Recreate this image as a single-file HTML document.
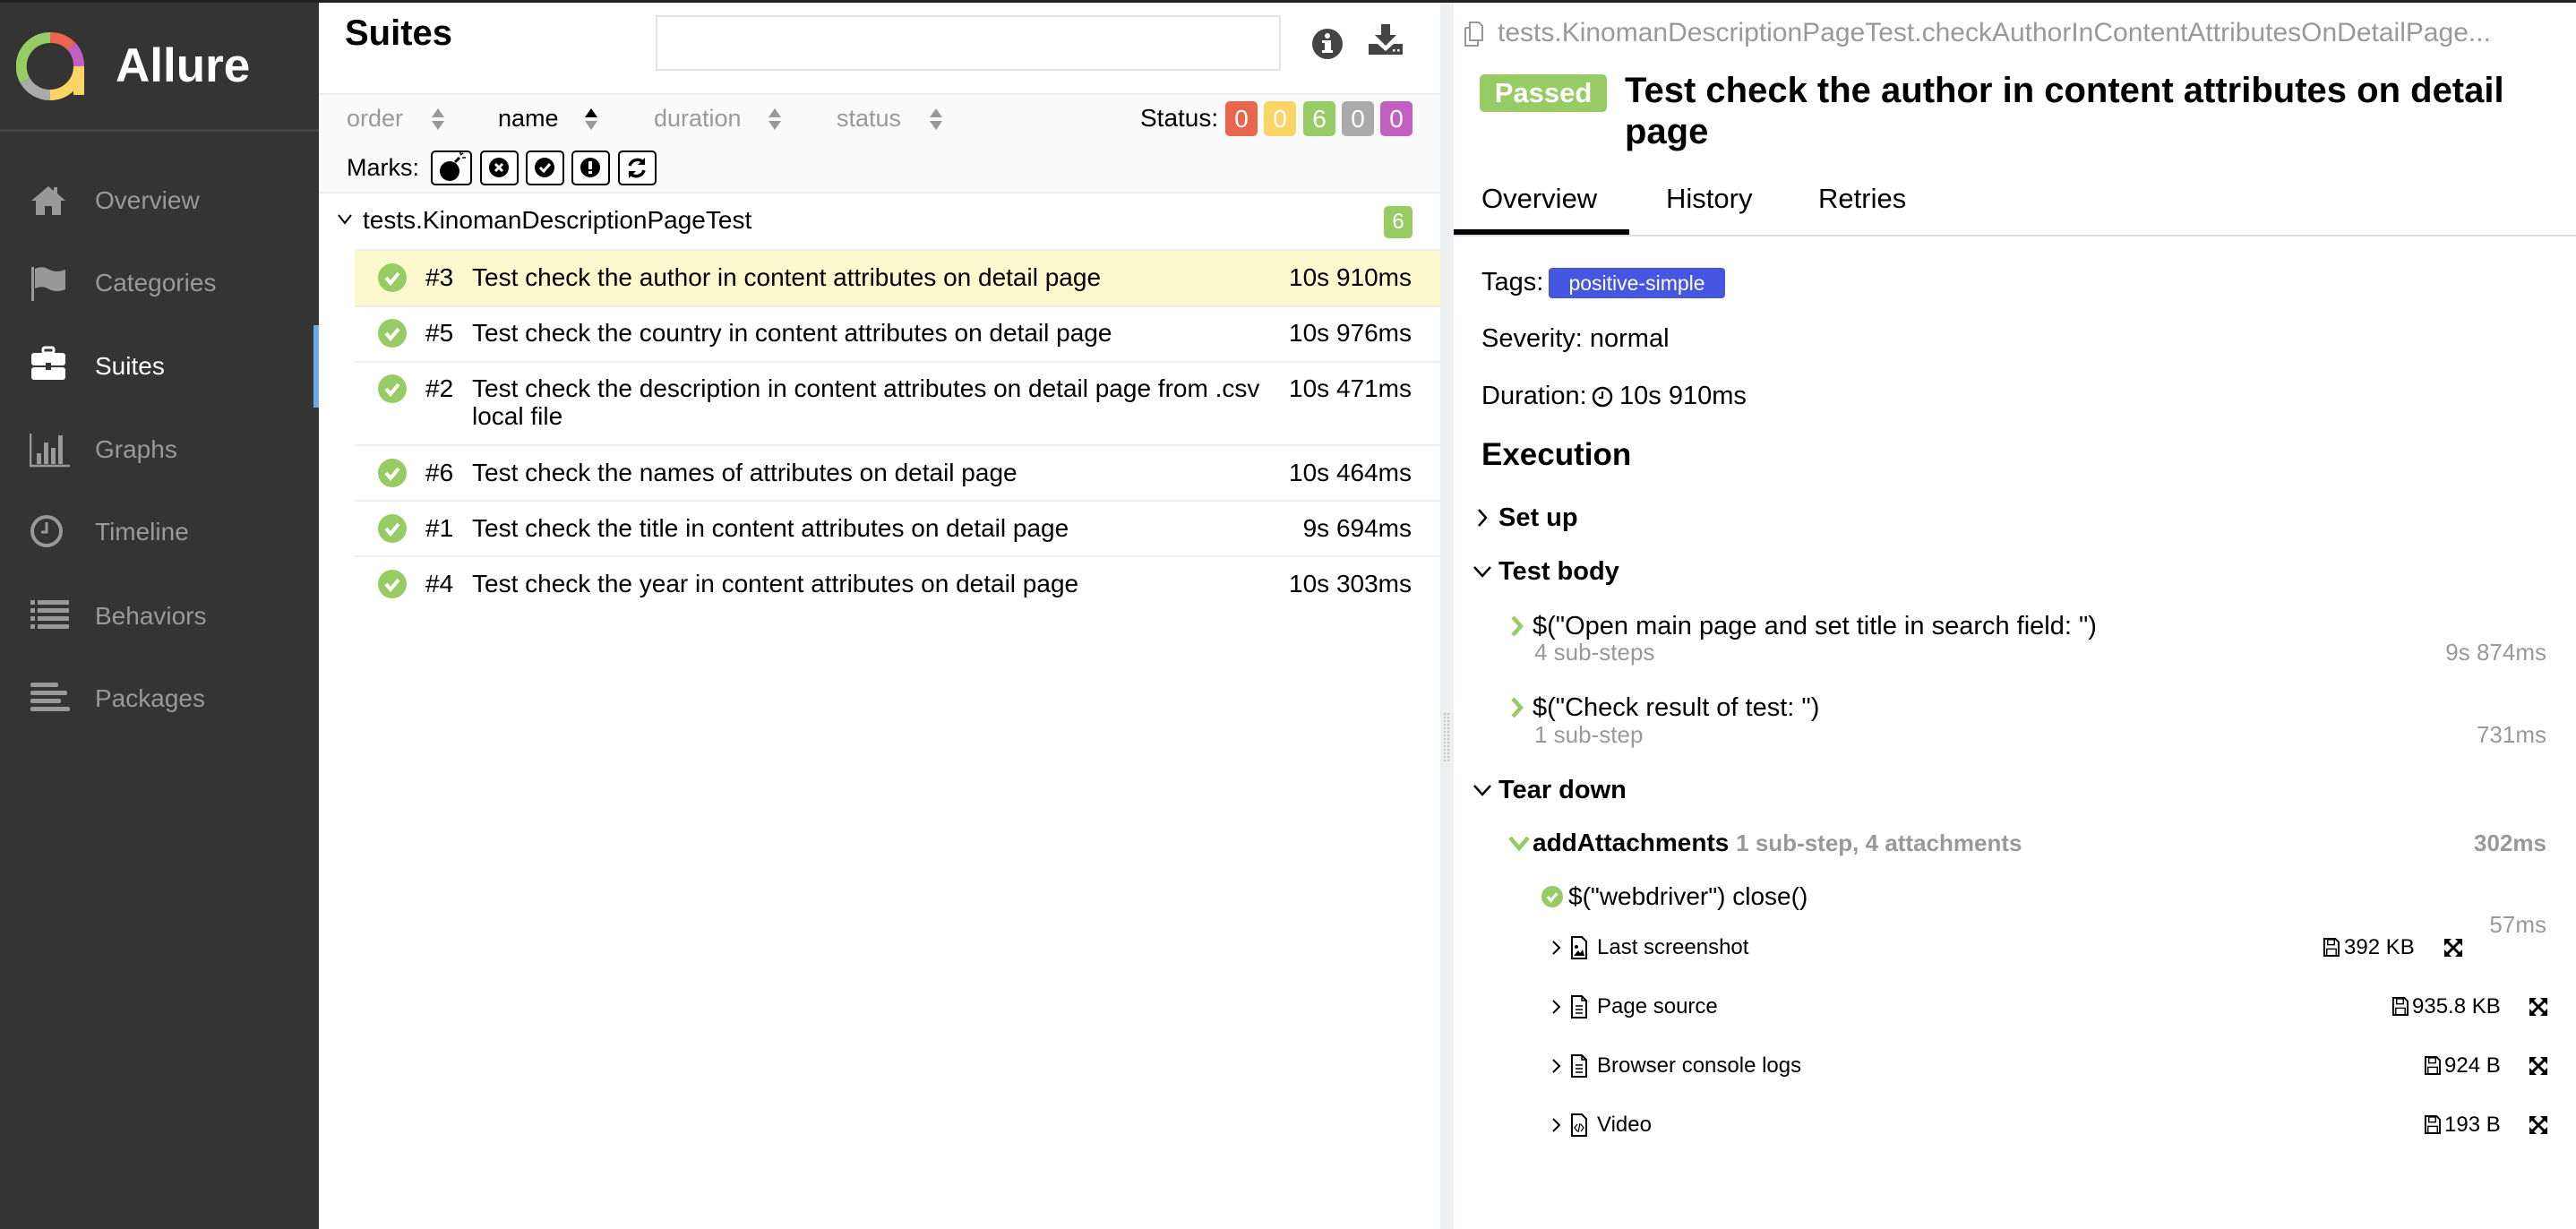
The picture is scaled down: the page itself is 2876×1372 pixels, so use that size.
<!DOCTYPE html>
<html><head><meta charset="utf-8">
<style>
*{margin:0;padding:0;box-sizing:border-box}
body{width:2876px;height:1372px;overflow:hidden;background:#fff;font-family:"Liberation Sans",Arial,sans-serif;position:relative;color:#000}
.a{position:absolute;white-space:nowrap}
.t{position:absolute;white-space:nowrap;height:40px;line-height:40px}
#side{position:absolute;left:0;top:0;width:356px;height:1372px;background:#343434}
.nav{position:absolute;left:106px;font-size:28px;color:#999;height:40px;line-height:40px}
.ni{position:absolute;left:33px}
.mid{font-size:28px}
.sortl{color:#999;font-size:27px}
.badge{position:absolute;top:113px;width:36px;height:39px;border-radius:5px;color:#fff;font-size:28px;text-align:center;line-height:39px}
.mk{position:absolute;top:168px;width:43px;height:39px;border:2px solid #000;border-radius:5px;background:#fff}
.row{position:absolute;left:396px;width:1212px;border-top:2px solid #eee}
.chk{position:absolute}
.r{position:absolute;font-size:29px;height:40px;line-height:40px;white-space:nowrap}
.gray{color:#999}
.att{position:absolute;font-size:24px;height:34px;line-height:34px;white-space:nowrap}
</style></head><body>
<div class="a" style="left:0;top:0;width:2876px;height:3px;background:#222;z-index:5"></div>

<div id="side">
  <svg class="a" style="left:18px;top:36px" width="80" height="80" viewBox="0 0 80 80">
    <g fill="none" stroke-width="12">
      <path d="M38 6 A32 32 0 0 0 10 54" stroke="#97cc64"/>
      <path d="M38 6 A32 32 0 0 1 62 16" stroke="#e8664e"/>
      <path d="M62 16 A32 32 0 0 1 70 38" stroke="#c160c0"/>
      <path d="M70 38 L70 70" stroke="#fad465"/>
      <path d="M70 38 A32 32 0 0 1 38 70" stroke="#fad465"/>
      <path d="M10 54 A32 32 0 0 0 38 70" stroke="#aaa"/>
    </g>
  </svg>
  <div class="a" style="left:129px;top:44px;font-size:53px;font-weight:bold;color:#fff;line-height:60px">Allure</div>
  <div class="a" style="left:0;top:144px;width:356px;height:3px;background:#444"></div>

  <!-- overview -->
  <svg class="ni" style="top:206px" width="42" height="36" viewBox="0 0 42 36"><path d="M21 2 L2 18 L7 18 L7 34 L17 34 L17 24 L25 24 L25 34 L35 34 L35 18 L40 18 L31 10 L31 3 L27 3 L27 7 Z" fill="#999"/></svg>
  <div class="nav" style="top:204px">Overview</div>
  <svg class="ni" style="top:296px" width="42" height="42" viewBox="0 0 42 42"><rect x="2" y="2" width="3" height="38" fill="#999"/><path d="M6 4 Q14 0 22 5 Q30 9 40 5 L40 27 Q30 31 22 27 Q14 22 6 26 Z" fill="#999"/></svg>
  <div class="nav" style="top:296px">Categories</div>
  <svg class="ni" style="top:386px" width="42" height="42" viewBox="0 0 42 42"><rect x="15" y="2" width="12" height="6" rx="2" fill="none" stroke="#fff" stroke-width="3"/><rect x="2" y="8" width="38" height="14" rx="3" fill="#fff"/><rect x="2" y="24" width="38" height="14" rx="3" fill="#fff"/><rect x="18" y="19" width="6" height="8" fill="#343434"/></svg>
  <div class="nav" style="top:389px;color:#fff">Suites</div>
  <div class="a" style="left:350px;top:363px;width:6px;height:92px;background:#6ea9e8"></div>
  <svg class="ni" style="top:482px" width="46" height="40" viewBox="0 0 46 40"><path d="M1 2 V38 H45" fill="none" stroke="#999" stroke-width="2.5"/><rect x="8" y="24" width="5" height="12" fill="#999"/><rect x="16" y="12" width="5" height="24" fill="#999"/><rect x="24" y="18" width="5" height="18" fill="#999"/><rect x="32" y="4" width="5" height="32" fill="#999"/></svg>
  <div class="nav" style="top:482px">Graphs</div>
  <svg class="ni" style="top:574px" width="40" height="40" viewBox="0 0 40 40"><circle cx="19" cy="19" r="16" fill="none" stroke="#999" stroke-width="4"/><path d="M19 9 V20 H13" fill="none" stroke="#999" stroke-width="3"/></svg>
  <div class="nav" style="top:574px">Timeline</div>
  <svg class="ni" style="top:668px" width="46" height="40" viewBox="0 0 46 40"><g fill="#999"><rect x="1" y="2" width="5" height="5"/><rect x="9" y="2" width="35" height="5"/><rect x="1" y="11" width="5" height="5"/><rect x="9" y="11" width="35" height="5"/><rect x="1" y="20" width="5" height="5"/><rect x="9" y="20" width="35" height="5"/><rect x="1" y="29" width="5" height="5"/><rect x="9" y="29" width="35" height="5"/></g></svg>
  <div class="nav" style="top:668px">Behaviors</div>
  <svg class="ni" style="top:760px" width="46" height="40" viewBox="0 0 46 40"><g fill="#999"><rect x="1" y="2" width="31" height="5" rx="2"/><rect x="1" y="11" width="41" height="5" rx="2"/><rect x="1" y="20" width="34" height="5" rx="2"/><rect x="1" y="29" width="44" height="5" rx="2"/></g></svg>
  <div class="nav" style="top:760px">Packages</div>
</div>

<!-- middle panel -->
<div class="a" style="left:385px;top:14px;font-size:40px;font-weight:bold;line-height:46px">Suites</div>
<div class="a" style="left:732px;top:17px;width:698px;height:62px;border:2px solid #e4e4e4"></div>
<svg class="a" style="left:1464px;top:31px" width="36" height="36" viewBox="0 0 36 36"><circle cx="18" cy="18" r="17" fill="#444"/><rect x="15" y="14" width="7" height="13" fill="#fff"/><rect x="12" y="14" width="6" height="3" fill="#fff"/><rect x="12" y="25" width="12" height="3" fill="#fff"/><circle cx="18" cy="9" r="3" fill="#fff"/></svg>
<svg class="a" style="left:1527px;top:27px" width="40" height="34" viewBox="0 0 40 34"><path d="M15 0 H25 V12 H32 L20 24 L8 12 H15 Z" fill="#444"/><path d="M1 22 H11 L20 30 L29 22 H39 V34 H1 Z" fill="#444"/><rect x="28" y="28" width="2.5" height="2.5" fill="#fff"/><rect x="33" y="28" width="2.5" height="2.5" fill="#fff"/></svg>

<div class="a" style="left:356px;top:104px;width:1252px;height:112px;background:#fafafa;border-top:2px solid #eee;border-bottom:2px solid #eee"></div>
<div class="t sortl" style="left:387px;top:112px">order</div>
<div class="t" style="left:556px;top:112px;font-size:27px">name</div>
<div class="t sortl" style="left:730px;top:112px">duration</div>
<div class="t sortl" style="left:934px;top:112px">status</div>
<svg class="a" style="left:480px;top:120px" width="18" height="26" viewBox="0 0 18 26"><path d="M9 1 L16 11 H2 Z" fill="#999"/><path d="M9 25 L16 15 H2 Z" fill="#999"/></svg>
<svg class="a" style="left:651px;top:120px" width="18" height="26" viewBox="0 0 18 26"><path d="M9 1 L16 11 H2 Z" fill="#000"/><path d="M9 25 L16 15 H2 Z" fill="#999"/></svg>
<svg class="a" style="left:856px;top:120px" width="18" height="26" viewBox="0 0 18 26"><path d="M9 1 L16 11 H2 Z" fill="#999"/><path d="M9 25 L16 15 H2 Z" fill="#999"/></svg>
<svg class="a" style="left:1036px;top:120px" width="18" height="26" viewBox="0 0 18 26"><path d="M9 1 L16 11 H2 Z" fill="#999"/><path d="M9 25 L16 15 H2 Z" fill="#999"/></svg>
<div class="t" style="left:1273px;top:112px;font-size:28px">Status:</div>
<div class="badge" style="left:1368px;background:#e8664e">0</div>
<div class="badge" style="left:1411px;background:#fad465">0</div>
<div class="badge" style="left:1455px;background:#97cc64">6</div>
<div class="badge" style="left:1498px;background:#aaa">0</div>
<div class="badge" style="left:1541px;background:#c160c0">0</div>

<div class="t" style="left:387px;top:167px;font-size:27px">Marks:</div>
<div class="mk" style="left:481px;width:46px"><svg width="42" height="35" viewBox="0 0 42 35"><circle cx="19" cy="21" r="11" fill="#000"/><path d="M25 11 L30 6" stroke="#000" stroke-width="3"/><path d="M31 3 l3 -2 M33 6 l4 0 M31 2 l0 -2" stroke="#000" stroke-width="1.5"/></svg></div>
<div class="mk" style="left:536px"><svg width="39" height="35" viewBox="0 0 39 35"><circle cx="19" cy="17" r="11" fill="#000"/><path d="M15 13 L23 21 M23 13 L15 21" stroke="#fff" stroke-width="3"/></svg></div>
<div class="mk" style="left:587px"><svg width="39" height="35" viewBox="0 0 39 35"><circle cx="19" cy="17" r="11" fill="#000"/><path d="M14 17 L18 21 L25 13" stroke="#fff" stroke-width="3" fill="none"/></svg></div>
<div class="mk" style="left:638px"><svg width="39" height="35" viewBox="0 0 39 35"><circle cx="19" cy="17" r="11" fill="#000"/><rect x="17" y="10" width="4" height="9" fill="#fff"/><rect x="17" y="21" width="4" height="3" fill="#fff"/></svg></div>
<div class="mk" style="left:690px"><svg width="39" height="35" viewBox="0 0 39 35"><path d="M11 15 A9 9 0 0 1 26 11" fill="none" stroke="#000" stroke-width="3.5"/><path d="M28 6 L28 14 L20 14 Z" fill="#000"/><path d="M27 20 A9 9 0 0 1 12 24" fill="none" stroke="#000" stroke-width="3.5"/><path d="M10 29 L10 21 L18 21 Z" fill="#000"/></svg></div>

<!-- group -->
<svg class="a" style="left:376px;top:238px" width="18" height="14" viewBox="0 0 18 14"><path d="M2 2 L9 11 L16 2" fill="none" stroke="#000" stroke-width="2"/></svg>
<div class="t mid" style="left:405px;top:226px">tests.KinomanDescriptionPageTest</div>
<div class="a" style="left:1545px;top:230px;width:32px;height:36px;background:#97cc64;border-radius:5px;color:#fff;font-size:24px;text-align:center;line-height:36px">6</div>

<!-- rows -->
<div class="row" style="top:278px;height:63px;background:#fdf9cf"></div>
<div class="row" style="top:341px;height:62px"></div>
<div class="row" style="top:403px;height:94px"></div>
<div class="row" style="top:496px;height:62px"></div>
<div class="row" style="top:558px;height:62px"></div>
<div class="row" style="top:620px;height:62px"></div>

<svg width="0" height="0" style="position:absolute"><defs><symbol id="ck" viewBox="0 0 32 32"><circle cx="16" cy="16" r="16" fill="#97cc64"/><path d="M9 16 L14 22 L23 11" fill="none" stroke="#fff" stroke-width="4"/></symbol></defs></svg>

<svg class="chk" style="left:422px;top:294px" width="32" height="32"><use href="#ck"/></svg>
<div class="t mid" style="left:475px;top:290px">#3</div><div class="t mid" style="left:527px;top:290px">Test check the author in content attributes on detail page</div><div class="t mid" style="left:1376px;top:290px;width:200px;text-align:right">10s 910ms</div>

<svg class="chk" style="left:422px;top:356px" width="32" height="32"><use href="#ck"/></svg>
<div class="t mid" style="left:475px;top:352px">#5</div><div class="t mid" style="left:527px;top:352px">Test check the country in content attributes on detail page</div><div class="t mid" style="left:1376px;top:352px;width:200px;text-align:right">10s 976ms</div>

<svg class="chk" style="left:422px;top:418px" width="32" height="32"><use href="#ck"/></svg>
<div class="t mid" style="left:475px;top:414px">#2</div><div class="t mid" style="left:527px;top:414px">Test check the description in content attributes on detail page from .csv</div><div class="t mid" style="left:527px;top:445px">local file</div><div class="t mid" style="left:1376px;top:414px;width:200px;text-align:right">10s 471ms</div>

<svg class="chk" style="left:422px;top:512px" width="32" height="32"><use href="#ck"/></svg>
<div class="t mid" style="left:475px;top:508px">#6</div><div class="t mid" style="left:527px;top:508px">Test check the names of attributes on detail page</div><div class="t mid" style="left:1376px;top:508px;width:200px;text-align:right">10s 464ms</div>

<svg class="chk" style="left:422px;top:574px" width="32" height="32"><use href="#ck"/></svg>
<div class="t mid" style="left:475px;top:570px">#1</div><div class="t mid" style="left:527px;top:570px">Test check the title in content attributes on detail page</div><div class="t mid" style="left:1376px;top:570px;width:200px;text-align:right">9s 694ms</div>

<svg class="chk" style="left:422px;top:636px" width="32" height="32"><use href="#ck"/></svg>
<div class="t mid" style="left:475px;top:632px">#4</div><div class="t mid" style="left:527px;top:632px">Test check the year in content attributes on detail page</div><div class="t mid" style="left:1376px;top:632px;width:200px;text-align:right">10s 303ms</div>

<!-- splitter -->
<div class="a" style="left:1608px;top:3px;width:15px;height:1369px;background:#eeeff0"></div>
<div class="a" style="left:1611px;top:795px;width:8px;height:55px;background-image:radial-gradient(#c8c8c8 1px,transparent 1.5px);background-size:4px 4px"></div>

<!-- right pane -->
<svg class="a" style="left:1633px;top:23px" width="26" height="30" viewBox="0 0 26 30"><path d="M8 2 H18 L22 6 V22 H8 Z" fill="none" stroke="#999" stroke-width="2"/><path d="M3 8 H8 M3 8 V28 H17 V22" fill="none" stroke="#999" stroke-width="2"/></svg>
<div class="t" style="left:1672px;top:17px;font-size:30px;color:#999;width:1200px;overflow:hidden;text-overflow:ellipsis">tests.KinomanDescriptionPageTest.checkAuthorInContentAttributesOnDetailPage...</div>
<div class="a" style="left:1652px;top:83px;width:142px;height:42px;background:#97cc64;border-radius:5px;color:#fff;font-size:31px;font-weight:bold;text-align:center;line-height:42px">Passed</div>
<div class="a" style="left:1814px;top:78px;width:1030px;font-size:40px;font-weight:bold;line-height:46px;white-space:normal">Test check the author in content attributes on detail page</div>

<div class="t" style="left:1654px;top:202px;font-size:31px">Overview</div>
<div class="t" style="left:1860px;top:202px;font-size:31px">History</div>
<div class="t" style="left:2030px;top:202px;font-size:31px">Retries</div>
<div class="a" style="left:1623px;top:262px;width:1253px;height:2px;background:#e0e0e0"></div>
<div class="a" style="left:1623px;top:256px;width:196px;height:6px;background:#000"></div>

<div class="r" style="left:1654px;top:295px">Tags:</div>
<div class="a" style="left:1729px;top:299px;width:197px;height:34px;background:#4656e0;border-radius:4px;color:#fff;font-size:23px;text-align:center;line-height:34px">positive-simple</div>
<div class="r" style="left:1654px;top:358px">Severity: normal</div>
<div class="r" style="left:1654px;top:422px">Duration:</div>
<svg class="a" style="left:1777px;top:431px" width="24" height="24" viewBox="0 0 24 24"><circle cx="12" cy="12" r="10" fill="none" stroke="#000" stroke-width="2.5"/><path d="M12 6 V13 H8" fill="none" stroke="#000" stroke-width="2"/></svg>
<div class="r" style="left:1808px;top:422px">10s 910ms</div>
<div class="a" style="left:1654px;top:488px;font-size:35px;font-weight:bold;line-height:40px">Execution</div>

<svg class="a" style="left:1648px;top:566px" width="14" height="24" viewBox="0 0 14 24"><path d="M3 3 L11 12 L3 21" fill="none" stroke="#000" stroke-width="2.5"/></svg>
<div class="r" style="left:1673px;top:558px;font-weight:bold">Set up</div>
<svg class="a" style="left:1643px;top:630px" width="24" height="16" viewBox="0 0 24 16"><path d="M3 3 L12 13 L21 3" fill="none" stroke="#000" stroke-width="2.5"/></svg>
<div class="r" style="left:1673px;top:618px;font-weight:bold">Test body</div>

<svg class="a" style="left:1686px;top:686px" width="16" height="26" viewBox="0 0 16 26"><path d="M3 3 L12 13 L3 23" fill="none" stroke="#97cc64" stroke-width="4.5"/></svg>
<div class="r" style="left:1711px;top:679px">$("Open main page and set title in search field: ")</div>
<div class="r gray" style="left:1713px;top:708px;font-size:26px">4 sub-steps</div>
<div class="r gray" style="left:2643px;top:708px;width:200px;text-align:right;font-size:26px">9s 874ms</div>

<svg class="a" style="left:1686px;top:777px" width="16" height="26" viewBox="0 0 16 26"><path d="M3 3 L12 13 L3 23" fill="none" stroke="#97cc64" stroke-width="4.5"/></svg>
<div class="r" style="left:1711px;top:770px">$("Check result of test: ")</div>
<div class="r gray" style="left:1713px;top:800px;font-size:26px">1 sub-step</div>
<div class="r gray" style="left:2643px;top:800px;width:200px;text-align:right;font-size:26px">731ms</div>

<svg class="a" style="left:1643px;top:874px" width="24" height="16" viewBox="0 0 24 16"><path d="M3 3 L12 13 L21 3" fill="none" stroke="#000" stroke-width="2.5"/></svg>
<div class="r" style="left:1673px;top:862px;font-weight:bold">Tear down</div>

<svg class="a" style="left:1683px;top:932px" width="26" height="18" viewBox="0 0 26 18"><path d="M3 3 L13 15 L23 3" fill="none" stroke="#97cc64" stroke-width="4.5"/></svg>
<div class="r" style="left:1711px;top:921px;font-weight:bold;font-size:28px">addAttachments <span style="color:#999;font-size:26px">1 sub-step, 4 attachments</span></div>
<div class="r" style="left:2643px;top:921px;width:200px;text-align:right;font-weight:bold;color:#999;font-size:26px">302ms</div>

<svg class="a" style="left:1721px;top:989px" width="24" height="24"><use href="#ck"/></svg>
<div class="r" style="left:1751px;top:981px;font-size:28px">$("webdriver") close()</div>
<div class="r gray" style="left:2643px;top:1012px;width:200px;text-align:right;font-size:26px">57ms</div>

<!-- attachments -->
<svg width="0" height="0" style="position:absolute"><defs>
<symbol id="chv" viewBox="0 0 12 18"><path d="M2 2 L9 9 L2 16" fill="none" stroke="#000" stroke-width="2"/></symbol>
<symbol id="doc" viewBox="0 0 20 26"><path d="M2 1 H13 L18 6 V25 H2 Z" fill="none" stroke="#000" stroke-width="2"/><path d="M13 1 V6 H18" fill="none" stroke="#000" stroke-width="1.5"/><path d="M6 12 H14 M6 16 H14 M6 20 H14" stroke="#000" stroke-width="1.5"/></symbol>
<symbol id="img" viewBox="0 0 20 26"><path d="M2 1 H13 L18 6 V25 H2 Z" fill="none" stroke="#000" stroke-width="2"/><circle cx="7" cy="12" r="2" fill="#000"/><path d="M4 22 L9 16 L11 19 L14 15 L16 22 Z" fill="#000"/></symbol>
<symbol id="vid" viewBox="0 0 20 26"><path d="M2 1 H13 L18 6 V25 H2 Z" fill="none" stroke="#000" stroke-width="2"/><path d="M8 12 L5 16 L8 20 M12 12 L15 16 L12 20 M11 11 L9 21" fill="none" stroke="#000" stroke-width="1.3"/></symbol>
<symbol id="sv" viewBox="0 0 20 22"><path d="M2 1 H15 L19 5 V21 H2 Z" fill="none" stroke="#000" stroke-width="2"/><rect x="6" y="2" width="8" height="6" fill="none" stroke="#000" stroke-width="1.5"/><rect x="5" y="13" width="11" height="8" fill="none" stroke="#000" stroke-width="1.5"/></symbol>
<symbol id="ex" viewBox="0 0 22 22"><g stroke="#000" stroke-width="3" fill="none"><path d="M4 4 L18 18 M18 4 L4 18"/></g><g fill="#000"><path d="M1 1 H9 L1 9 Z"/><path d="M21 1 H13 L21 9 Z"/><path d="M1 21 H9 L1 13 Z"/><path d="M21 21 H13 L21 13 Z"/></g></symbol>
</defs></svg>

<svg class="a" style="left:1732px;top:1049px" width="12" height="18"><use href="#chv"/></svg>
<svg class="a" style="left:1753px;top:1045px" width="20" height="26"><use href="#img"/></svg>
<div class="att" style="left:1783px;top:1041px">Last screenshot</div>
<svg class="a" style="left:2593px;top:1047px" width="19" height="21"><use href="#sv"/></svg>
<div class="att" style="left:2617px;top:1041px">392 KB</div>
<svg class="a" style="left:2728px;top:1047px" width="22" height="22"><use href="#ex"/></svg>

<svg class="a" style="left:1732px;top:1115px" width="12" height="18"><use href="#chv"/></svg>
<svg class="a" style="left:1753px;top:1111px" width="20" height="26"><use href="#doc"/></svg>
<div class="att" style="left:1783px;top:1107px">Page source</div>
<svg class="a" style="left:2670px;top:1113px" width="19" height="21"><use href="#sv"/></svg>
<div class="att" style="left:2693px;top:1107px">935.8 KB</div>
<svg class="a" style="left:2823px;top:1113px" width="22" height="22"><use href="#ex"/></svg>

<svg class="a" style="left:1732px;top:1181px" width="12" height="18"><use href="#chv"/></svg>
<svg class="a" style="left:1753px;top:1177px" width="20" height="26"><use href="#doc"/></svg>
<div class="att" style="left:1783px;top:1173px">Browser console logs</div>
<svg class="a" style="left:2706px;top:1179px" width="19" height="21"><use href="#sv"/></svg>
<div class="att" style="left:2729px;top:1173px">924 B</div>
<svg class="a" style="left:2823px;top:1179px" width="22" height="22"><use href="#ex"/></svg>

<svg class="a" style="left:1732px;top:1247px" width="12" height="18"><use href="#chv"/></svg>
<svg class="a" style="left:1753px;top:1243px" width="20" height="26"><use href="#vid"/></svg>
<div class="att" style="left:1783px;top:1239px">Video</div>
<svg class="a" style="left:2706px;top:1245px" width="19" height="21"><use href="#sv"/></svg>
<div class="att" style="left:2729px;top:1239px">193 B</div>
<svg class="a" style="left:2823px;top:1245px" width="22" height="22"><use href="#ex"/></svg>
</body></html>
